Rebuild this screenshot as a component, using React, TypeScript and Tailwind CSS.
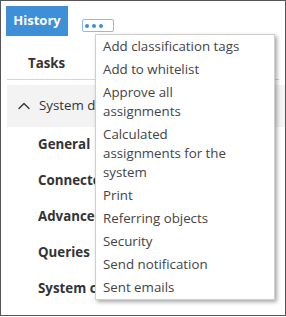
import { ChevronUp } from "lucide-react";

const menuItems = [
  "Add classification tags",
  "Add to whitelist",
  "Approve all assignments",
  "Calculated assignments for the system",
  "Print",
  "Referring objects",
  "Security",
  "Send notification",
  "Sent emails",
];

const sections = ["General", "Connectors", "Advanced", "Queries", "System configuration"];

export default function App() {
  return (
    <div className="relative w-[286px] h-[316px] overflow-hidden border border-[#555] bg-white font-['Open_Sans',sans-serif] text-[#333]">
      {/* header */}
      <div className="flex items-start pt-[5px] pl-[5px]">
        <button className="h-[30px] w-[62px] bg-[#3f8fd8] text-[13px] font-bold text-white">History</button>
        <button className="ml-[14px] mt-[13px] flex h-[13px] w-[32px] items-center gap-[3px] rounded-[2px] border border-[#8cbcec] pl-[2px]">
          <span className="h-[4px] w-[4px] rounded-full bg-[#3f8fd8]" />
          <span className="h-[4px] w-[4px] rounded-full bg-[#3f8fd8]" />
          <span className="h-[4px] w-[4px] rounded-full bg-[#3f8fd8]" />
        </button>
      </div>

      <div className="mx-[6px] mt-[17px] border-b border-[#d4d4d4] pb-[6px] pl-[21px] text-[13.3px] leading-[20px] font-bold">
        Tasks
      </div>

      <div className="ml-[6px] mt-[5px] flex h-[42px] items-center bg-[#f3f3f3] pl-[7px]">
        <ChevronUp size={20} strokeWidth={1.6} className="text-[#333]" />
        <span className="ml-[5px] whitespace-nowrap text-[13.3px]">System data</span>
      </div>

      <div className="pl-[37px]">
        {sections.map((s) => (
          <div key={s} className="flex h-[36px] items-center whitespace-nowrap text-[13.3px] font-bold">
            {s}
          </div>
        ))}
      </div>

      {/* dropdown, sits over the task list */}
      <div className="absolute left-[94px] top-[33px] w-[180px] border border-[#cfcfcf] bg-white shadow-[2px_2px_4px_rgba(0,0,0,0.35)]">
        {menuItems.map((m) => (
          <div key={m} className="py-[2px] pl-[7px] pr-[30px] text-[13.3px] leading-[19px] text-[#444]">
            {m}
          </div>
        ))}
      </div>
    </div>
  );
}
